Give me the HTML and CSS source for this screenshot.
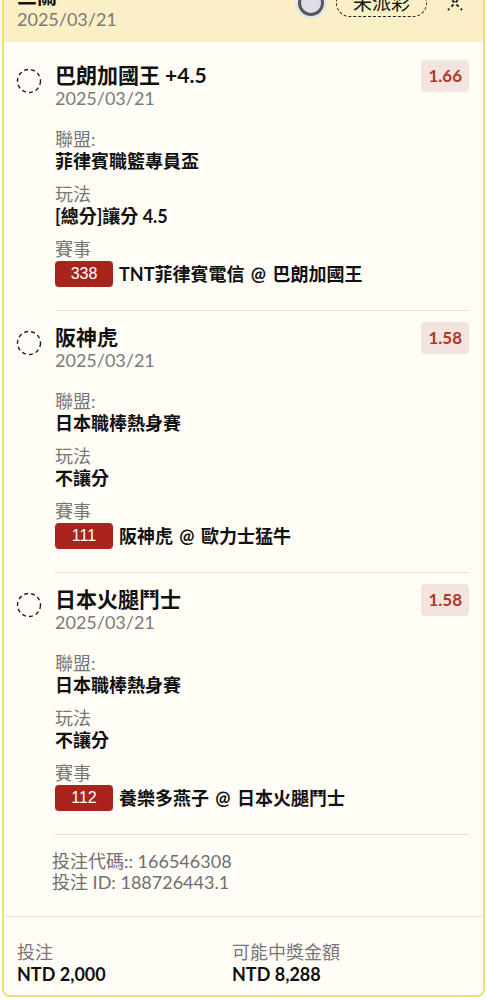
FILE: index.html
```html
<!DOCTYPE html>
<html lang="zh-Hant">
<head>
    <meta charset="UTF-8">
    <meta name="viewport" content="width=device-width, initial-scale=1.0">
    <title>投注單</title>
    <link rel="stylesheet" href="styles.css">
</head>
<body>

    <div class="ticket">
        <div class="ticket-head">
            <div>
                <div class="ticket-title">三關</div>
                <div class="date">2025/03/21</div>
            </div>
            <div class="head-tools">
                <span class="spin"></span>
                <span class="status">未派彩</span>
                <svg class="close" width="20" height="20" viewBox="0 0 20 20">
                    <path d="M3 3 L17 17 M17 3 L3 17" stroke="#222" stroke-width="2" stroke-dasharray="3 3" fill="none"/>
                </svg>
            </div>
        </div>

        <div class="legs">
            <!-- leg 1 -->
            <div class="leg">
                <svg class="pending" width="26" height="26" viewBox="0 0 26 26">
                    <circle cx="13" cy="13" r="11.5" fill="none" stroke="#222" stroke-width="1.4" stroke-dasharray="4 3"/>
                </svg>
                <div class="leg-main">
                    <div class="leg-head">
                        <div>
                            <div class="leg-title">巴朗加國王 +4.5</div>
                            <div class="date">2025/03/21</div>
                        </div>
                        <span class="odds">1.66</span>
                    </div>
                    <div class="label">聯盟:</div>
                    <div class="value">菲律賓職籃專員盃</div>
                    <div class="label">玩法</div>
                    <div class="value">[總分]讓分 4.5</div>
                    <div class="label">賽事</div>
                    <div class="match">
                        <span class="match-no">338</span>
                        <span class="value">TNT菲律賓電信 @ 巴朗加國王</span>
                    </div>
                </div>
            </div>

            <!-- leg 2 -->
            <div class="leg">
                <svg class="pending" width="26" height="26" viewBox="0 0 26 26">
                    <circle cx="13" cy="13" r="11.5" fill="none" stroke="#222" stroke-width="1.4" stroke-dasharray="4 3"/>
                </svg>
                <div class="leg-main">
                    <div class="leg-head">
                        <div>
                            <div class="leg-title">阪神虎</div>
                            <div class="date">2025/03/21</div>
                        </div>
                        <span class="odds">1.58</span>
                    </div>
                    <div class="label">聯盟:</div>
                    <div class="value">日本職棒熱身賽</div>
                    <div class="label">玩法</div>
                    <div class="value">不讓分</div>
                    <div class="label">賽事</div>
                    <div class="match">
                        <span class="match-no">111</span>
                        <span class="value">阪神虎 @ 歐力士猛牛</span>
                    </div>
                </div>
            </div>

            <!-- leg 3 -->
            <div class="leg">
                <svg class="pending" width="26" height="26" viewBox="0 0 26 26">
                    <circle cx="13" cy="13" r="11.5" fill="none" stroke="#222" stroke-width="1.4" stroke-dasharray="4 3"/>
                </svg>
                <div class="leg-main">
                    <div class="leg-head">
                        <div>
                            <div class="leg-title">日本火腿鬥士</div>
                            <div class="date">2025/03/21</div>
                        </div>
                        <span class="odds">1.58</span>
                    </div>
                    <div class="label">聯盟:</div>
                    <div class="value">日本職棒熱身賽</div>
                    <div class="label">玩法</div>
                    <div class="value">不讓分</div>
                    <div class="label">賽事</div>
                    <div class="match">
                        <span class="match-no">112</span>
                        <span class="value">養樂多燕子 @ 日本火腿鬥士</span>
                    </div>
                </div>
            </div>
        </div>

        <div class="codes">
            <div>投注代碼:: 166546308</div>
            <div>投注 ID: 188726443.1</div>
        </div>

        <div class="totals">
            <div class="total">
                <div class="label">投注</div>
                <div class="value">NTD 2,000</div>
            </div>
            <div class="total">
                <div class="label">可能中獎金額</div>
                <div class="value">NTD 8,288</div>
            </div>
        </div>
    </div>

</body>
</html>
```

FILE: styles.css
```css
body {
    margin: 0;
    background: #fff;
    font-family: Lato, "Noto Sans CJK TC", sans-serif;
    color: #111;
}
.ticket {
    margin: -28px 2px 0;
    border: 2px solid #f0de7a;
    border-radius: 8px;
    background: #fffdf6;
    overflow: hidden;
}
.ticket-head {
    display: flex;
    justify-content: space-between;
    align-items: center;
    background: #fbefc6;
    padding: 10px 18px 12px 13px;
}
.ticket-title {
    font-size: 20px;
    font-weight: bold;
    line-height: 24px;
}
.date {
    font-size: 18px;
    line-height: 22px;
    color: #7a7a7a;
}
.head-tools {
    display: flex;
    align-items: center;
    gap: 12px;
    margin-bottom: 8px;
}
.spin {
    width: 20px;
    height: 20px;
    border-radius: 50%;
    border: 3px solid #55565e;
    background: #dedfe6;
    box-shadow: 0 0 0 3px #e6e6ea;
}
.status {
    font-size: 19px;
    line-height: 26px;
    padding: 0 16px;
    border: 1.5px dashed #222;
    border-radius: 14px;
}
.close {
    margin-left: 6px;
}
.legs {
    padding: 7px 14px 0 12px;
}
.leg {
    display: flex;
    gap: 13px;
}
.pending {
    flex-shrink: 0;
    margin-top: 19px;
}
.leg-main {
    flex: 1;
    padding: 14px 0 23px;
    border-bottom: 1px solid #e4e1d8;
}
.leg-head {
    display: flex;
    justify-content: space-between;
    align-items: flex-start;
    margin-bottom: 19px;
}
.leg-title {
    font-size: 21px;
    font-weight: bold;
    line-height: 24px;
}
.odds {
    font-size: 17px;
    font-weight: bold;
    color: #b1362c;
    background: #f3e4df;
    border-radius: 4px;
    line-height: 32px;
    padding: 0 7px;
    margin-top: -3px;
}
.label {
    font-size: 18px;
    line-height: 22px;
    color: #777;
}
.value {
    font-size: 18px;
    font-weight: bold;
    line-height: 22px;
    margin-bottom: 11px;
}
.match {
    display: flex;
    align-items: center;
    gap: 6px;
    margin-top: 1px;
}
.match .value {
    margin-bottom: 0;
    word-spacing: 2px;
}
.match-no {
    background: #a8241d;
    color: #fff;
    font-family: "Liberation Sans", "Noto Sans CJK TC", sans-serif;
    font-size: 16px;
    line-height: 26px;
    width: 58px;
    text-align: center;
    border-radius: 4px;
}
.codes {
    padding: 16px 14px 23px 48px;
    font-size: 18px;
    line-height: 21px;
    color: #6f6f6f;
    border-bottom: 1px solid #e8e4da;
}
.totals {
    display: flex;
    padding: 24px 14px 10px 13px;
}
.total {
    width: 215px;
}
.total .value {
    margin-bottom: 0;
}
```
